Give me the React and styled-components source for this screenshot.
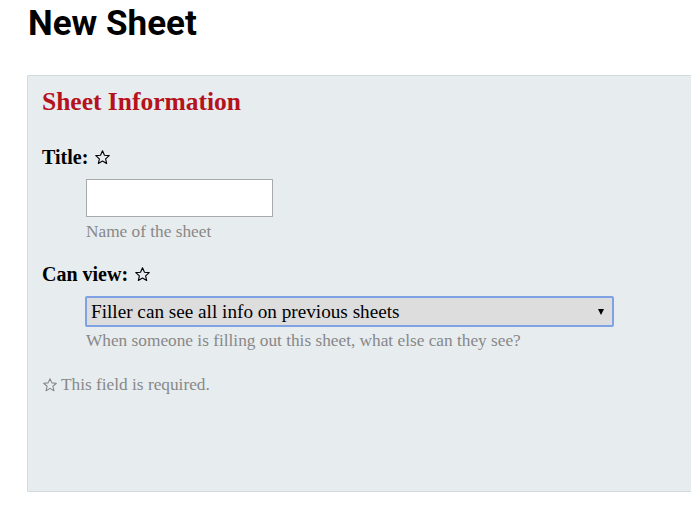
import React from "react";
import styled, { createGlobalStyle } from "styled-components";

const Global = createGlobalStyle`
  html, body { margin: 0; padding: 0; background: #fff; overflow: hidden; }
  body { font-family: "Liberation Serif", Georgia, serif; }
`;

const Page = styled.div`
  padding: 0 0 0 27px;
`;

const Heading = styled.h1`
  margin: 0;
  padding: 4px 0 0 1px;
  font-family: Roboto, "Liberation Sans", sans-serif;
  font-weight: 700;
  font-size: 35px;
  line-height: 40px;
  color: #000;
`;

const Panel = styled.section`
  margin-top: 31px;
  background: #e7ecef;
  border: 1px solid #d2dadd;
  border-right: none;
  border-radius: 2px 0 0 2px;
  height: 417px;
  box-sizing: border-box;
  padding: 12px 14px;
  display: flex;
  flex-direction: column;
`;

const PanelTitle = styled.h2`
  margin: 0 0 29px;
  font-size: 25.5px;
  line-height: 28px;
  font-weight: 700;
  color: #b5121b;
`;

const Field = styled.div`
  margin-bottom: 19px;
`;

const Label = styled.label`
  display: flex;
  align-items: center;
  gap: 6px;
  font-size: 20px;
  font-weight: 700;
  line-height: 24px;
  color: #000;
`;

const Star = styled.svg`
  flex: none;
`;

const Control = styled.div`
  padding-left: 44px;
  margin-top: 10px;
`;

const TextInput = styled.input`
  display: block;
  width: 187px;
  height: 38px;
  box-sizing: border-box;
  border: 1px solid #a9a9a9;
  background: #fff;
  margin: 0;
`;

const Select = styled.div`
  display: flex;
  align-items: center;
  justify-content: space-between;
  margin-left: -1px;
  width: 529px;
  height: 31px;
  box-sizing: border-box;
  border: 2px solid #7ea2e3;
  border-radius: 2px;
  background: #dddddd;
  padding: 0 8px 0 4px;
  font-size: 19.2px;
  color: #000;
`;

const Arrow = styled.span`
  width: 0;
  height: 0;
  border-left: 3.5px solid transparent;
  border-right: 3.5px solid transparent;
  border-top: 6px solid #000;
  margin-top: 1px;
`;

const Help = styled.div`
  margin-top: ${(p) => p.$gap ?? 4}px;
  font-size: 17.3px;
  line-height: 22px;
  color: #888;
`;

const Required = styled.div`
  display: flex;
  align-items: center;
  gap: 3px;
  margin-top: 3px;
  font-size: 17.3px;
  line-height: 22px;
  color: #888;
`;

const StarIcon = ({ color = "#000", size = 17 }) => (
  <Star viewBox="0 0 24 24" width={size} height={size}>
    <path
      d="M12 2.6l2.8 6.2 6.7.6-5.1 4.5 1.5 6.6L12 17.1l-5.9 3.4 1.5-6.6-5.1-4.5 6.7-.6z"
      fill="none"
      stroke={color}
      strokeWidth="1.6"
      strokeLinejoin="round"
    />
  </Star>
);

export default function App() {
  return (
    <>
      <Global />
      <Page>
        <Heading>New Sheet</Heading>
        <Panel>
          <PanelTitle>Sheet Information</PanelTitle>
          <Field>
            <Label>
              Title: <StarIcon />
            </Label>
            <Control>
              <TextInput type="text" />
              <Help $gap={4}>Name of the sheet</Help>
            </Control>
          </Field>
          <Field>
            <Label>
              Can view: <StarIcon />
            </Label>
            <Control>
              <Select>
                <span>Filler can see all info on previous sheets</span>
                <Arrow />
              </Select>
              <Help $gap={3}>When someone is filling out this sheet, what else can they see?</Help>
            </Control>
          </Field>
          <Required>
            <StarIcon color="#888" size={16} /> This field is required.
          </Required>
        </Panel>
      </Page>
    </>
  );
}
